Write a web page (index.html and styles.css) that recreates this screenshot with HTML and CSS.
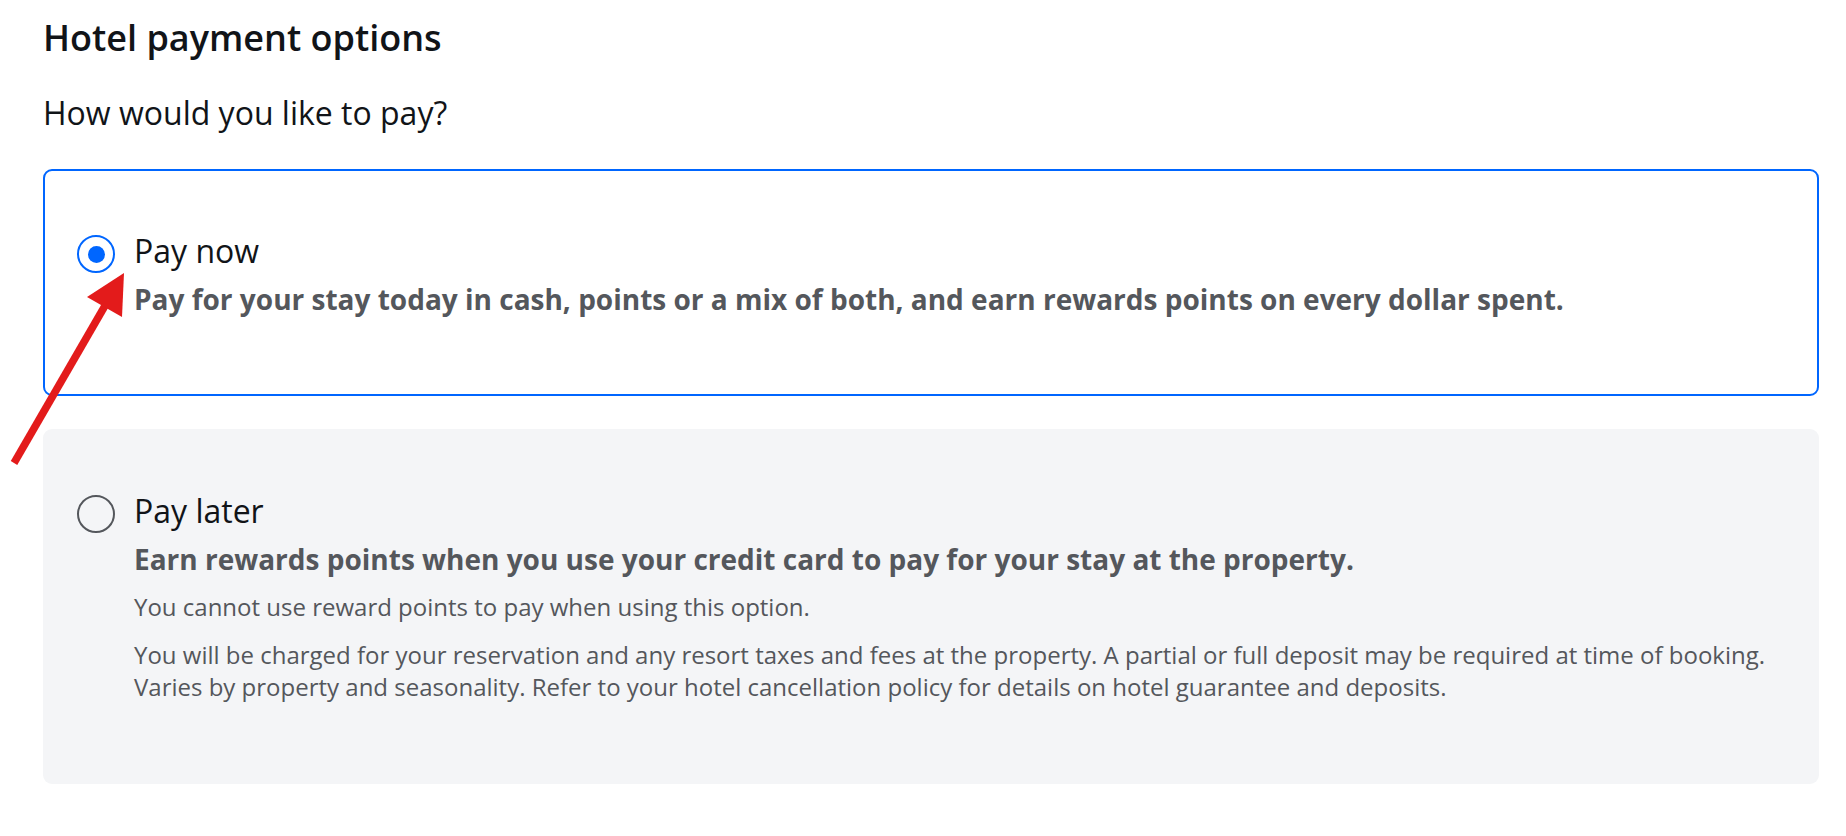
FILE: index.html
```html
<!DOCTYPE html>
<html lang="en">
<head>
<meta charset="utf-8">
<title>Hotel payment options</title>
<link rel="stylesheet" href="styles.css">
</head>
<body>
<main class="page">
  <h2 class="title">Hotel payment options</h2>
  <p class="question">How would you like to pay?</p>

  <div class="option option-selected">
    <span class="radio radio-on"><span class="radio-dot"></span></span>
    <div class="option-body">
      <div class="option-label">Pay now</div>
      <div class="option-desc">Pay for your stay today in cash, points or a mix of both, and earn rewards points on every dollar spent.</div>
    </div>
  </div>

  <div class="option option-muted">
    <span class="radio"></span>
    <div class="option-body">
      <div class="option-label">Pay later</div>
      <div class="option-desc">Earn rewards points when you use your credit card to pay for your stay at the property.</div>
      <p class="option-note note-first">You cannot use reward points to pay when using this option.</p>
      <p class="option-note">You will be charged for your reservation and any resort taxes and fees at the property. A partial or full deposit may be required at time of booking. Varies by property and seasonality. Refer to your hotel cancellation policy for details on hotel guarantee and deposits.</p>
    </div>
  </div>
</main>

<svg class="annotation" width="1846" height="836" viewBox="0 0 1846 836" aria-hidden="true">
  <line x1="14" y1="463" x2="106" y2="304" stroke="#e31b1b" stroke-width="7.5" />
  <polygon points="124,273 87,297 122,317" fill="#e31b1b" />
</svg>
</body>
</html>
```

FILE: styles.css
```css
html, body {
  margin: 0;
  padding: 0;
  background: #ffffff;
}

body {
  font-family: "Open Sans", "DejaVu Sans", sans-serif;
  color: #121417;
  position: relative;
  width: 1846px;
  height: 836px;
  overflow: hidden;
}

.page {
  padding: 14px 27px 0 43px;
}

.title {
  margin: 0;
  font-size: 36px;
  line-height: 48px;
  font-weight: 600;
  color: #111418;
}

.question {
  margin: 29px 0 0;
  font-size: 32px;
  line-height: 44px;
  font-weight: 400;
  color: #111418;
}

.option {
  display: flex;
  align-items: flex-start;
  gap: 19px;
  border-radius: 9px;
  box-sizing: border-box;
}

.option-selected {
  margin-top: 34px;
  height: 227px;
  border: 2px solid #0066ff;
  padding: 59px 32px 0 32px;
}

.option-muted {
  margin-top: 33px;
  height: 355px;
  background: #f4f5f7;
  padding: 61px 34px 0 34px;
}

.radio {
  flex: none;
  width: 38px;
  height: 38px;
  margin-top: 5px;
  border-radius: 50%;
  border: 2.5px solid #54575c;
  box-sizing: border-box;
  display: flex;
  align-items: center;
  justify-content: center;
}

.radio-on {
  border-color: #0066ff;
}

.radio-dot {
  width: 17px;
  height: 17px;
  border-radius: 50%;
  background: #0066ff;
}

.option-body {
  display: flex;
  flex-direction: column;
}

.option-label {
  font-size: 32px;
  line-height: 42px;
  color: #111418;
}

.option-desc {
  margin-top: 8px;
  font-size: 28px;
  line-height: 38px;
  font-weight: 700;
  color: #54575c;
}

.option-note {
  margin: 16px 0 0;
  font-size: 24px;
  line-height: 32px;
  color: #54575c;
}

.note-first {
  margin-top: 13px;
}

.annotation {
  position: absolute;
  left: 0;
  top: 0;
  pointer-events: none;
}
```
